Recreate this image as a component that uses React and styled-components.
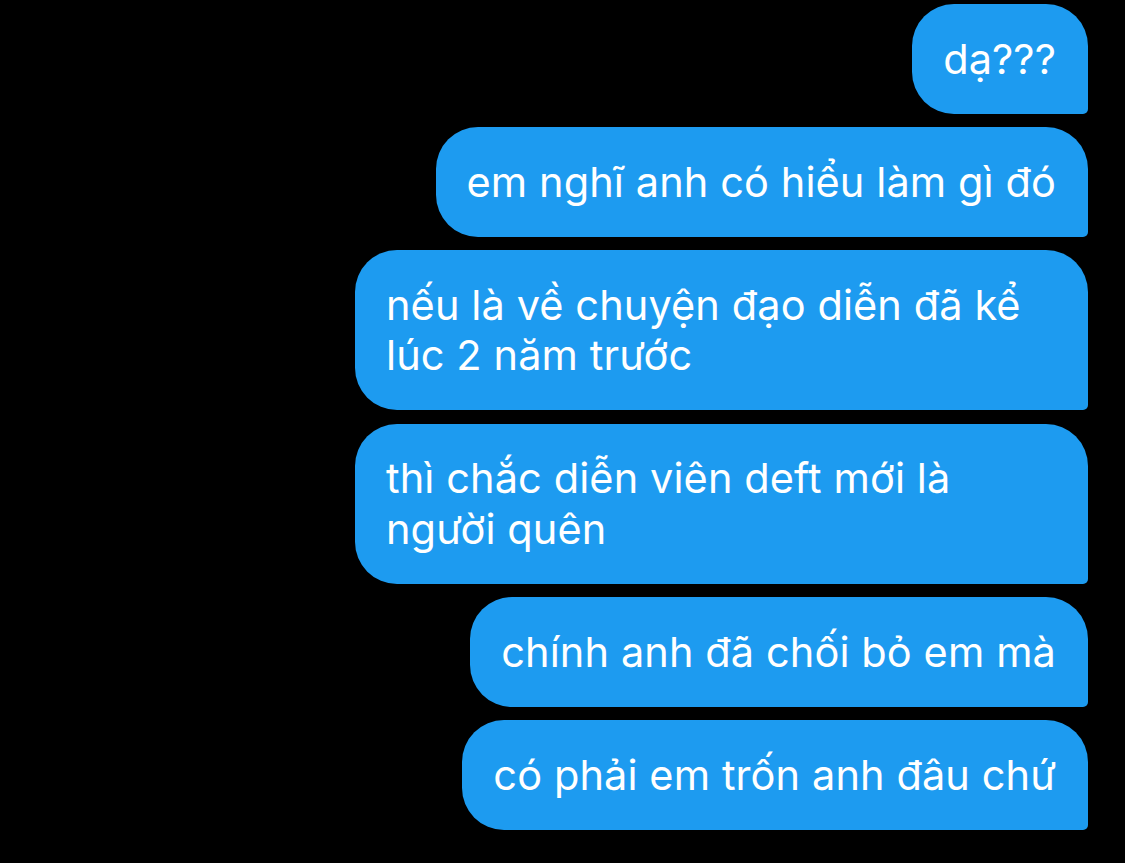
import React from "react";
import styled, { createGlobalStyle } from "styled-components";

const Global = createGlobalStyle`
  html, body { margin: 0; padding: 0; background: #000; }
  body { font-family: Inter, "Noto Sans", sans-serif; -webkit-font-smoothing: antialiased; }
`;

const Thread = styled.div`
  display: flex;
  flex-direction: column;
  align-items: flex-end;
  gap: 13.5px;
  padding: 4px 37px 33px 0;
  min-height: 863px;
  box-sizing: border-box;
  background: #000;
`;

const Bubble = styled.div`
  background: #1d9bf0;
  color: #fff;
  font-size: 41.5px;
  line-height: 50.5px;
  padding: 29.5px 32px 29.5px 31px;
  border-radius: 42px 42px 5px 42px;
  max-width: 733px;
  box-sizing: border-box;
  letter-spacing: 0.1px;
`;

const messages = [
  "dạ???",
  "em nghĩ anh có hiểu làm gì đó",
  "nếu là về chuyện đạo diễn đã kể lúc 2 năm trước",
  "thì chắc diễn viên deft mới là người quên",
  "chính anh đã chối bỏ em mà",
  "có phải em trốn anh đâu chứ",
];

export default function App() {
  return (
    <>
      <Global />
      <Thread>
        {messages.map((m, i) => (
          <Bubble key={i}>{m}</Bubble>
        ))}
      </Thread>
    </>
  );
}
